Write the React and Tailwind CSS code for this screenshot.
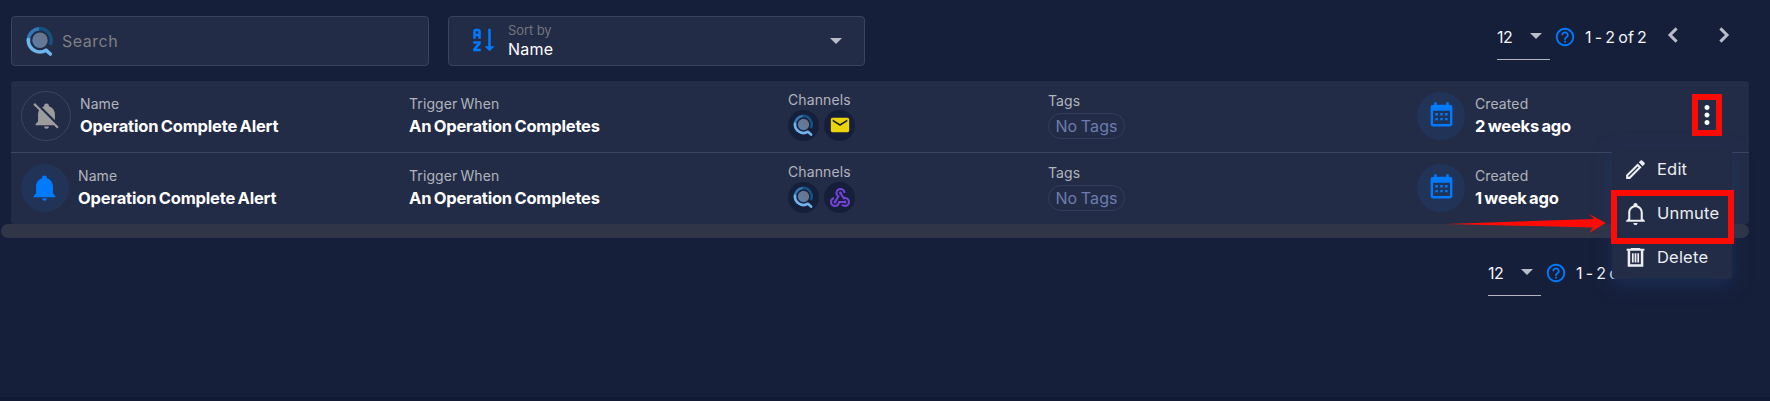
import React from "react";
import { MdWebhook, MdEmail, MdHelpOutline, MdMoreVert } from "react-icons/md";

function Mdi({ d, className }) {
  return (
    <svg viewBox="0 0 24 24" fill="currentColor" className={className}>
      <path d={d} />
    </svg>
  );
}

const ICONS = {
  sort: "M19 17H22L18 21L14 17H17V3H19M11 13V15L7.67 19H11V21H5V19L8.33 15H5V13M9 3H7C5.9 3 5 3.9 5 5V11H7V9H9V11H11V5C11 3.9 10.1 3 9 3M9 7H7V5H9Z",
  calendar:
    "M9,10V12H7V10H9M13,10V12H11V10H13M17,10V12H15V10H17M19,3A2,2 0 0,1 21,5V19A2,2 0 0,1 19,21H5C3.89,21 3,20.1 3,19V5A2,2 0 0,1 5,3H6V1H8V3H16V1H18V3H19M19,19V8H5V19H19M9,14V16H7V14H9M13,14V16H11V14H13M17,14V16H15V14H17Z",
  bell: "M21,19V20H3V19L5,17V11C5,7.9 7.03,5.17 10,4.29C10,4.19 10,4.1 10,4A2,2 0 0,1 12,2A2,2 0 0,1 14,4C14,4.1 14,4.19 14,4.29C16.97,5.17 19,7.9 19,11V17L21,19M14,21A2,2 0 0,1 12,23A2,2 0 0,1 10,21",
  bellOutline:
    "M10 21H14C14 22.1 13.1 23 12 23S10 22.1 10 21M21 19V20H3V19L5 17V11C5 7.9 7 5.2 10 4.3V4C10 2.9 10.9 2 12 2S14 2.9 14 4V4.3C17 5.2 19 7.9 19 11V17L21 19M17 11C17 8.2 14.8 6 12 6S7 8.2 7 11V18H17V11Z",
  bellOff:
    "M20.84,22.73L18.11,20H3V19L5,17V11C5,9.86 5.29,8.73 5.83,7.72L1.11,3L2.39,1.73L22.11,21.46L20.84,22.73M19,15.8V11C19,7.9 16.97,5.17 14,4.29C14,4.19 14,4.1 14,4A2,2 0 0,0 12,2A2,2 0 0,0 10,4C10,4.1 10,4.19 10,4.29C9.39,4.47 8.8,4.74 8.26,5.09L19,15.8M12,23A2,2 0 0,0 14,21H10A2,2 0 0,0 12,23Z",
  pencil:
    "M14.06,9L15,9.94L5.92,19H5V18.08L14.06,9M17.66,3C17.41,3 17.15,3.1 16.96,3.29L15.13,5.12L18.88,8.87L20.71,7.04C21.1,6.65 21.1,6 20.71,5.63L18.37,3.29C18.17,3.09 17.92,3 17.66,3M14.06,6.19L3,17.25V21H6.75L17.81,9.94L14.06,6.19Z",
};

function Chevron({ d }) {
  return (
    <svg viewBox="0 0 30 30" fill="none" stroke="currentColor" strokeWidth="3" className="size-[30px]">
      <path d={d} />
    </svg>
  );
}

function Trash({ className }) {
  return (
    <svg viewBox="0 0 24 24" fill="none" stroke="currentColor" className={className}>
      <path d="M3.5 4.6h17M7.5 3.8h9" strokeWidth="2" />
      <path d="M5.7 5v14.6h12.6V5" strokeWidth="2.4" />
      <path d="M9.4 7.8v9M12 7.8v9M14.6 7.8v9" strokeWidth="1.7" />
    </svg>
  );
}

function Logo({ className }) {
  return (
    <svg viewBox="0 0 28 30" fill="none" className={className}>
      <defs>
        <linearGradient id="lens" x1="0" y1="1" x2="1" y2="0">
          <stop offset="0" stopColor="#5d7fa8" />
          <stop offset="1" stopColor="#6b7186" />
        </linearGradient>
      </defs>
      <path d="M12.5 2.7A11.6 11.6 0 0 1 24.2 19" stroke="#15507f" strokeWidth="3.6" />
      <path d="M2.4 15.5A11.6 11.6 0 0 1 13 2.7" stroke="#2f78b5" strokeWidth="3.6" />
      <path d="M2.4 13.5A11.6 11.6 0 0 0 20 24.2L24.3 28" stroke="#6fb4ea" strokeWidth="3.6" strokeLinecap="round" strokeLinejoin="round" />
      <circle cx="14" cy="14.3" r="7.7" fill="url(#lens)" />
    </svg>
  );
}

function Caret() {
  return (
    <svg viewBox="0 0 12 6" className="h-1.5 w-3" fill="#b9bdc7">
      <path d="M0 0h12L6 6z" />
    </svg>
  );
}

function Label({ children }) {
  return <div className="text-[14px] leading-5 tracking-[0.1px] text-[#b1b4bd] [word-spacing:-1px]">{children}</div>;
}

function Value({ children }) {
  return <div className="text-[16.5px] font-bold leading-6 tracking-[-0.18px] text-white [word-spacing:-1.3px]">{children}</div>;
}

function Row({ muted, channel, created, children }) {
  return (
    <div className="box-content flex h-[71px] items-start">
      <div className="flex w-[398px] pl-2.5">
        {muted ? (
          <div className="mt-2.5 mr-[9px] flex size-[50px] items-center justify-center rounded-full border border-[#3c4560] text-[#9c9c9c]">
            <Mdi d={ICONS.bellOff} className="mb-0.5 size-[29px]" />
          </div>
        ) : (
          <div className="mt-[11px] mr-[9px] flex size-12 items-center justify-center rounded-full bg-[#223358] text-[#007bff]">
            <Mdi d={ICONS.bell} className="mr-0.5 mb-px size-[29px]" />
          </div>
        )}
        <div className="pt-[13px]">
          <Label>Name</Label>
          <Value>Operation Complete Alert</Value>
        </div>
      </div>
      <div className="w-[379px] pt-[13px]">
        <Label>Trigger When</Label>
        <Value>An Operation Completes</Value>
      </div>
      <div className="w-[260px] pt-[9px]">
        <Label>Channels</Label>
        <div className="flex gap-[5px]">
          <div className="flex size-[31px] items-center justify-center rounded-full bg-[#161f3a]">
            <Logo className="mr-px mb-[2px] h-[22px] w-[21px]" />
          </div>
          <div className="flex size-[31px] items-center justify-center rounded-full bg-[#161f3a]">{channel}</div>
        </div>
      </div>
      <div className="w-[369px] pt-[10px]">
        <Label>Tags</Label>
        <div className="mt-[2px] flex h-[26px] w-[77px] items-center justify-center rounded-full border border-[#323d5d] text-[16px] tracking-[0.1px] text-[#6c7cae] [word-spacing:-1px]">
          No Tags
        </div>
      </div>
      <div className="mt-[11px] mr-[10px] flex size-12 items-center justify-center rounded-full bg-[#223358] text-[#007bff]">
        <Mdi d={ICONS.calendar} className="mb-0.5 size-[29px]" />
      </div>
      <div className="w-[217px] pt-[13px]">
        <Label>Created</Label>
        <Value>{created}</Value>
      </div>
      {children}
    </div>
  );
}

function Pager({ arrows }) {
  return (
    <div className="flex items-start text-[16px] text-[#f4f5f8]">
      <div className="flex h-9 w-[53px] items-start justify-between border-b border-[#b1b5c0] pr-2">
        <span className="leading-[26px] tracking-[-0.5px]">12</span>
        <span className="pt-[9px]">
          <Caret />
        </span>
      </div>
      <MdHelpOutline className="mt-0.5 ml-1 size-[22px] text-[#007bff]" />
      <span className="ml-[9px] w-16 whitespace-nowrap leading-[26px] tracking-[0.1px] [word-spacing:-1.5px]">1 - 2 of 2</span>
      {arrows && (
        <div className="-mt-1 ml-[9px] flex gap-[21px] text-[#b9bdc7]">
          <Chevron d="M18.6 8.4 12 15l6.6 6.6" />
          <Chevron d="M11.4 8.4 18 15l-6.6 6.6" />
        </div>
      )}
    </div>
  );
}

function MenuItem({ icon, children }) {
  return (
    <div className="flex h-11 items-center gap-[9px] pl-[11px] text-[16.5px] tracking-[0.2px] text-[#eceef2]">
      {icon}
      {children}
    </div>
  );
}

export default function App() {
  return (
    <div className="relative h-[401px] w-[1770px] overflow-hidden bg-[#161f3a] font-['Inter',sans-serif]">
      <div className="flex pt-4 pl-[11px]">
        <div className="flex h-[50px] w-[418px] items-center gap-[8px] rounded border border-[#3a435d] bg-[#232c47] pl-[14px] text-[16px] tracking-[0.5px] text-[#7e7f84]">
          <Logo className="h-[30px] w-[28px]" />
          Search
        </div>
        <div className="ml-[19px] flex h-[50px] w-[417px] items-center rounded border border-[#3a435d] bg-[#232c47] pr-[22px] pl-[18px]">
          <Mdi d={ICONS.sort} className="mb-0.5 size-[30px] text-[#007bff]" />
          <div className="mb-0.5 ml-[11px] flex-1">
            <div className="text-[13px] leading-[17px] tracking-[-0.1px] text-[#72757e]">Sort by</div>
            <div className="text-[16px] leading-5 tracking-[0.2px] text-white">Name</div>
          </div>
          <Caret />
        </div>
        <div className="mt-2 ml-[632px]">
          <Pager arrows />
        </div>
      </div>

      <div className="mt-[15px] ml-[11px] w-[1738px] divide-y divide-[#3d4661] rounded bg-[#232c47]">
        <Row muted created="2 weeks ago" channel={<MdEmail className="mb-px size-[22px] text-[#ead50d]" />}>
          <div className="mt-[13px] flex h-[42px] w-[30px] items-center justify-center border-[6px] border-[#fe0b05] text-white">
            <MdMoreVert className="size-[30px] shrink-0" />
          </div>
        </Row>
        <Row created="1 week ago" channel={<MdWebhook className="size-6 text-[#7443d8]" />} />
      </div>
      <div className="ml-px h-[14px] w-[1748px] rounded-full bg-[#303548]" />
      <div className="mt-[22px] ml-[1488px]">
        <Pager />
      </div>

      <div className="absolute top-[147px] left-[1612px] h-[132px] w-[120px] rounded bg-[#232c47] shadow-[0_5px_18px_rgba(34,58,112,0.55)]">
        <MenuItem icon={<Mdi d={ICONS.pencil} className="size-[25px]" />}>Edit</MenuItem>
        <MenuItem icon={<Mdi d={ICONS.bellOutline} className="size-[25px]" />}>Unmute</MenuItem>
        <MenuItem icon={<Trash className="size-[25px]" />}>Delete</MenuItem>
      </div>
      <div className="absolute top-[190px] left-[1611px] h-[54px] w-[123px] border-[6px] border-[#fe0b05]" />
      <svg viewBox="0 0 160 20" className="absolute top-[214px] left-[1446px] h-5 w-40" fill="#fe0b05">
        <path d="M0 10 L148 5 L143 0 L160 9 L143 19 L147 13.5 Z" />
      </svg>
      <div className="absolute bottom-0 left-0 h-1 w-full bg-[#131b34]" />
    </div>
  );
}
